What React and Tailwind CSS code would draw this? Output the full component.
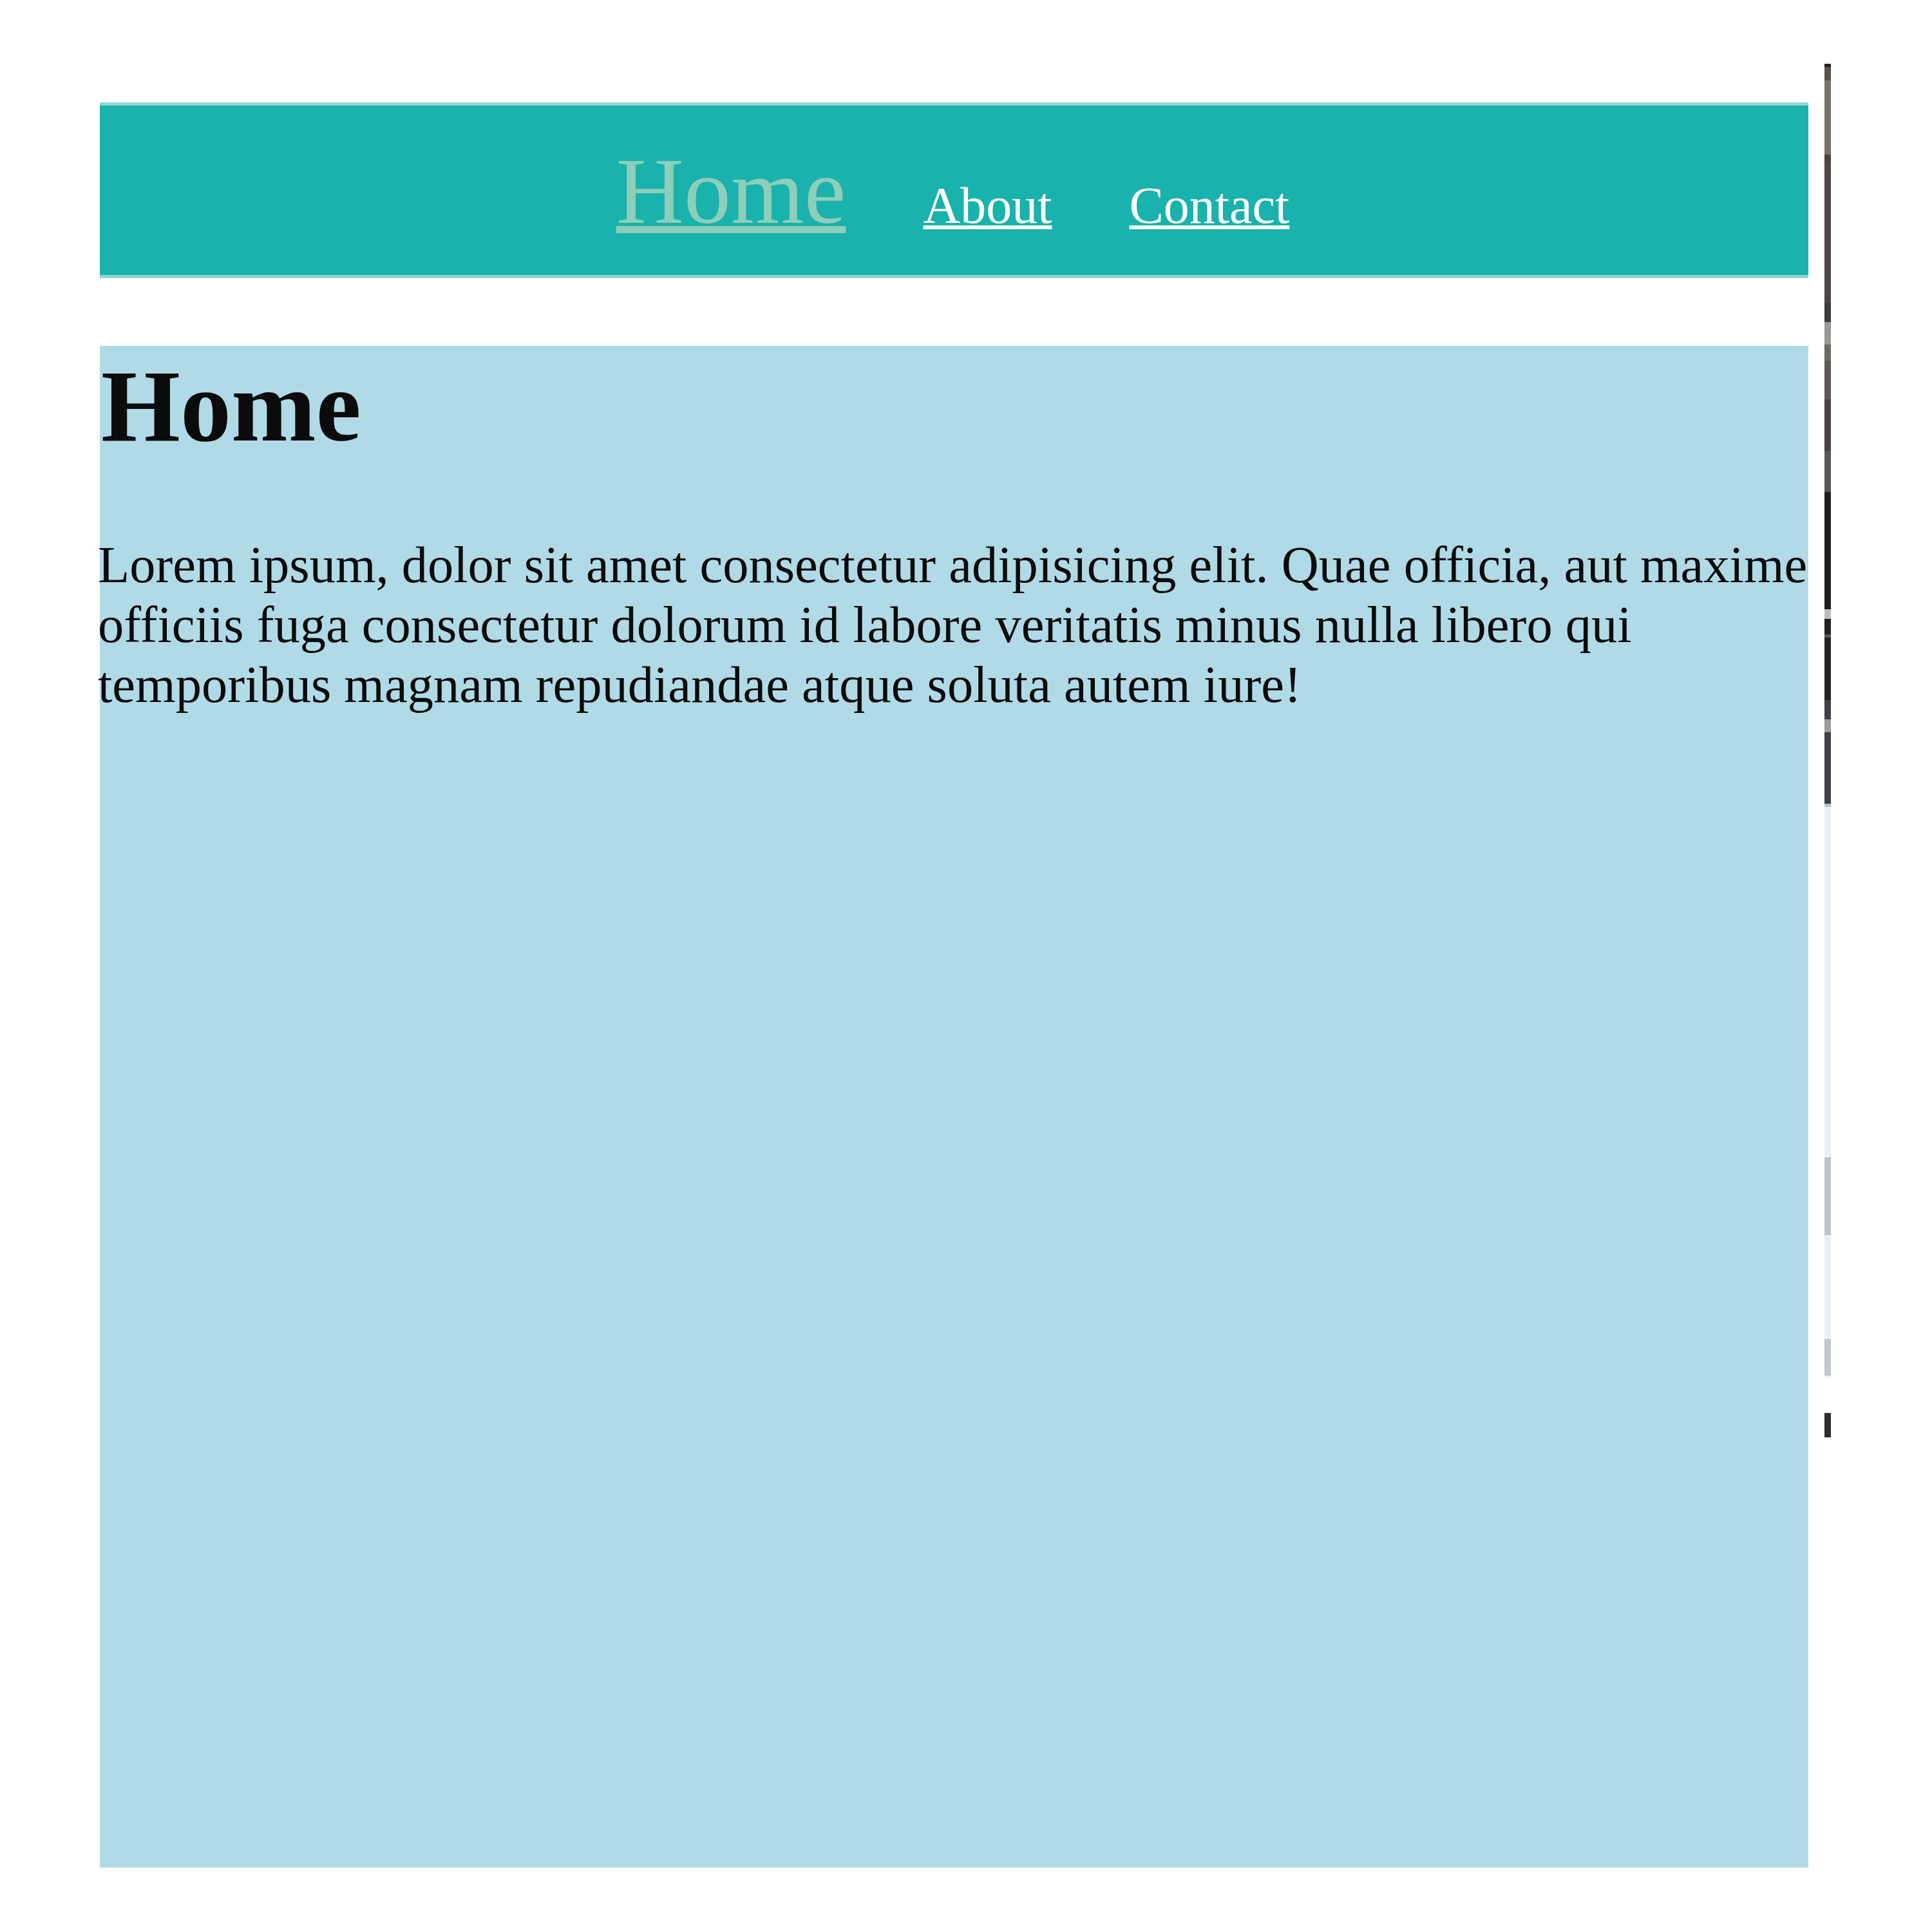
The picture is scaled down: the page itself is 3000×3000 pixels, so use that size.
import React from "react";

/* =========================
   EDGE STRIP (sliver of another window at the right)
========================= */

const stripSegments = [
  "h-[5px] bg-[#222222]",
  "h-[21px] bg-[#5b4f4b]",
  "h-[115px] bg-[#77736c]",
  "h-[12px] bg-[#4a433e]",
  "h-[218px] bg-[#4d4845]",
  "h-[30px] bg-[#3f3b38]",
  "h-[35px] bg-[#9a9794]",
  "h-[25px] bg-[#6e6a66]",
  "h-[60px] bg-[#5d5855]",
  "h-[80px] bg-[#4a4242]",
  "h-[64px] bg-[#5a5656]",
  "h-[182px] bg-[#1f1f1f]",
  "h-[15px] bg-[#bdbdbd]",
  "h-[24px] bg-[#241f24]",
  "h-[5px] bg-[#555555]",
  "h-[97px] bg-[#202426]",
  "h-[30px] bg-[#3d4145]",
  "h-[20px] bg-[#9a9ca0]",
  "h-[111px] bg-[#3d4145]",
  "h-[5px] bg-[#b0c4c8]",
  "h-[544px] bg-[#e6f4fa]",
  "h-[121px] bg-[#bfc6cb]",
  "h-[161px] bg-[#e6f4fa]",
  "h-[57px] bg-[#c2c7cc]",
  "h-[3px] bg-[#eeeeee]",
  "h-[55px] bg-white",
  "h-[38px] bg-[#2e2e2e]",
];

function EdgeStrip() {
  return (
    <div className="ml-[25px] mt-[99px] flex w-[10px] flex-col">
      {stripSegments.map((cls, i) => (
        <div key={i} className={cls} />
      ))}
    </div>
  );
}

/* =========================
   NAV
========================= */

function Nav() {
  return (
    <nav className="flex h-[273px] items-baseline justify-center gap-[120px] border-y-[5px] border-[#93d4d1] bg-[#19b2ad] pr-[4px] pt-[60px]">
      <a
        href="#"
        className="text-[146px] leading-none text-[#8dcfba] underline decoration-[11px] underline-offset-[5px]"
      >
        Home
      </a>
      <a
        href="#"
        className="text-[80px] leading-none text-white underline decoration-[6px] underline-offset-[4px]"
      >
        About
      </a>
      <a
        href="#"
        className="text-[80px] leading-none text-white underline decoration-[6px] underline-offset-[4px]"
      >
        Contact
      </a>
    </nav>
  );
}

/* =========================
   APP
========================= */

export default function App() {
  return (
    <div className="flex h-[3000px] w-[3000px] items-start bg-white pl-[155px] font-['Liberation_Serif',serif] text-[#0b0b0b]">
      <div className="w-[2653px] pt-[159px]">
        <Nav />

        <main className="mt-[105px] h-[2363px] bg-[#b1dae7] pt-[15px]">
          <h1 className="pl-[2px] text-[158px] font-bold leading-none">Home</h1>
          <p className="-ml-[3px] -mr-[14px] mt-[120px] text-[80.5px] leading-[93px]">
            Lorem ipsum, dolor sit amet consectetur adipisicing elit. Quae
            officia, aut maxime officiis fuga consectetur dolorum id labore
            veritatis minus nulla libero qui temporibus magnam repudiandae
            atque soluta autem iure!
          </p>
        </main>
      </div>

      <EdgeStrip />
    </div>
  );
}
